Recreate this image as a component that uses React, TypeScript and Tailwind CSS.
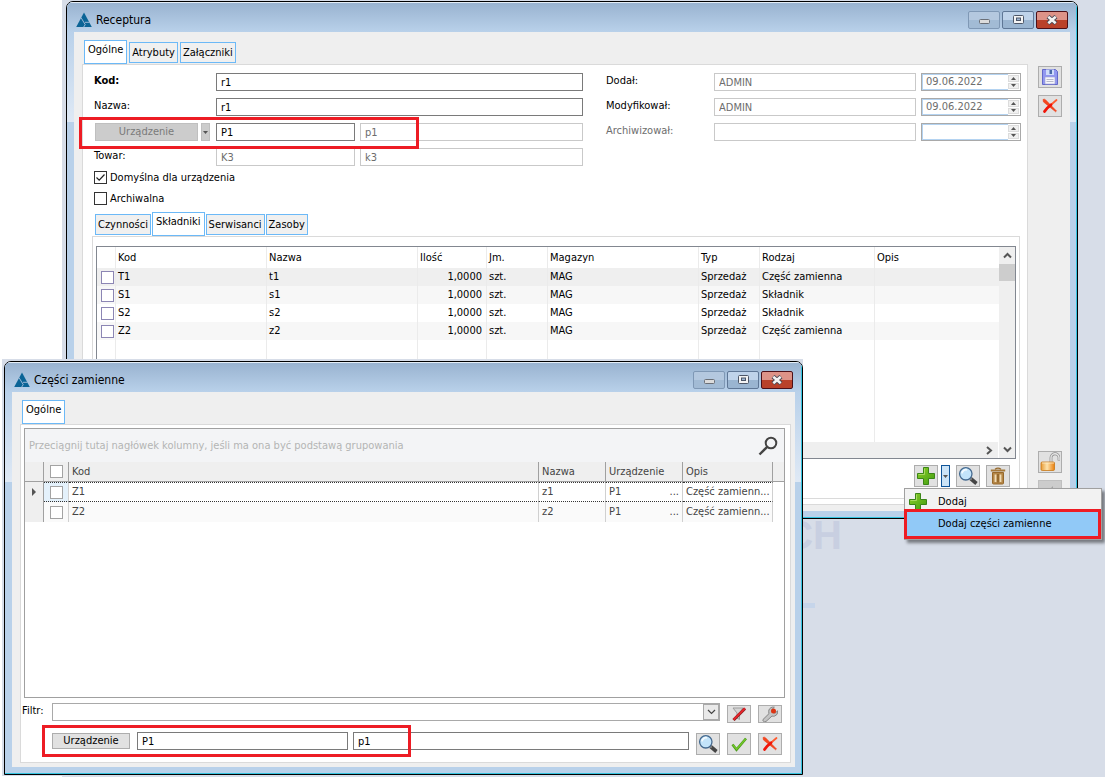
import type { ReactNode } from "react";
import clsx from "clsx";

const parts = [
  { code: "T1", name: "t1", kind: "Część zamienna" },
  { code: "S1", name: "s1", kind: "Składnik" },
  { code: "S2", name: "s2", kind: "Składnik" },
  { code: "Z2", name: "z2", kind: "Część zamienna" },
];

const spares = [
  { code: "Z1", name: "z1" },
  { code: "Z2", name: "z2" },
];

/* ---------- icons ---------- */

function Logo() {
  return (
    <svg width="16" height="16" viewBox="0 0 16 16" aria-hidden="true">
      <path d="M8 0.500L15.800 15H0.200z" fill="#0b6496" />
      <path d="M5 5.600L9.200 12.600L7.400 15.500" fill="none" stroke="#a9c1dc" strokeWidth="0.900" />
      <path d="M9 10.300H13.500" stroke="#a9c1dc" strokeWidth="0.900" />
    </svg>
  );
}

function PlusIcon() {
  return (
    <svg width="18" height="18" viewBox="0 0 18 18" aria-hidden="true">
      <defs>
        <linearGradient id="plus" x1="0" y1="0" x2="1" y2="1">
          <stop offset="0" stopColor="#8fd02a" />
          <stop offset="1" stopColor="#3f9c10" />
        </linearGradient>
      </defs>
      <path d="M6.500 .5h5v6h6v5h-6v6h-5v-6h-6v-5h6z" fill="url(#plus)" stroke="#3b8518" />
      <path d="M7.500 1.500v6h-6" fill="none" stroke="#b5e070" strokeWidth="0.800" />
    </svg>
  );
}

function LensIcon() {
  return (
    <svg width="20" height="20" viewBox="0 0 20 20" aria-hidden="true">
      <path d="M12.500 12.500l6 5" stroke="#454545" strokeWidth="3.600" />
      <path d="M11.600 11.600l2 2" stroke="#8a8a8a" strokeWidth="2" />
      <circle cx="7.800" cy="7.800" r="6.200" fill="#c3e4fa" stroke="#44698f" strokeWidth="1.300" />
      <path d="M4 7.400a4 4 0 0 1 5-3.600" fill="none" stroke="#f4fbff" strokeWidth="1.800" />
    </svg>
  );
}

function TrashIcon() {
  return (
    <svg width="18" height="18" viewBox="0 0 18 18" aria-hidden="true">
      <path d="M3.500 5.500h11v10.500q0 1-1 1h-9q-1 0-1-1z" fill="#b58748" stroke="#96692c" />
      <path d="M6.500 7.500v7.500M11.500 7.500v7.500" stroke="#f0dcb6" strokeWidth="1.800" />
      <path d="M9 7v8.500" stroke="#8f6327" strokeWidth="1.600" />
      <path d="M1.800 3.500h14.400" stroke="#a5793b" strokeWidth="2" />
      <path d="M6 2.300q3-2.200 6 0" fill="none" stroke="#96692c" strokeWidth="1.200" />
    </svg>
  );
}

function CrossIcon() {
  return (
    <svg width="16" height="16" viewBox="0 0 16 16" aria-hidden="true">
      <path d="M1 1.500q1.500-.8 2.500.3L14.500 13l-.8.800L1.500 4z" fill="#f4471f" stroke="#ee3a16" strokeWidth="0.600" />
      <path d="M14.500 2L9 6.800" stroke="#ff5c30" strokeWidth="1.800" strokeLinecap="round" />
      <path d="M9 6.800Q4.500 10 2.500 13.500" fill="none" stroke="#f01509" strokeWidth="2.800" strokeLinecap="round" />
    </svg>
  );
}

function DiskIcon() {
  return (
    <svg width="18" height="18" viewBox="0 0 18 18" aria-hidden="true">
      <path d="M1.500 1.500h13l2 2v13h-15z" fill="#9298f0" stroke="#6469c9" />
      <path d="M5 1.500h8V7H5z" fill="#cfdcfa" />
      <path d="M8.500 2H11v4H8.500z" fill="#4a6aa8" />
      <path d="M4 9h10v7H4z" fill="#f6f6fb" stroke="#9ea2d2" strokeWidth="0.600" />
      <path d="M5.500 11.500h7M5.500 13.500h7" stroke="#b6b9c9" />
    </svg>
  );
}

function LockIcon() {
  return (
    <svg width="20" height="20" viewBox="0 0 20 20" aria-hidden="true">
      <defs>
        <linearGradient id="lock" x1="0" y1="0" x2="1" y2="0">
          <stop offset="0" stopColor="#e79a35" />
          <stop offset="0.450" stopColor="#fde3ad" />
          <stop offset="1" stopColor="#ea7f0c" />
        </linearGradient>
      </defs>
      <path d="M11 10.500V6a4 4 0 0 1 8-.5V8.500" fill="none" stroke="#8e8e8e" strokeWidth="2.800" />
      <path d="M11 10.500V6a4 4 0 0 1 8-.5V8" fill="none" stroke="#e6e6e6" strokeWidth="1.400" />
      <rect x="1" y="10" width="13.500" height="8.500" rx="1.200" fill="url(#lock)" stroke="#c67718" strokeWidth="0.800" />
      <path d="M2 11h12" stroke="#fff0cd" strokeWidth="0.800" />
    </svg>
  );
}

function CheckIcon() {
  return (
    <svg width="16" height="16" viewBox="0 0 16 16" aria-hidden="true">
      <path d="M1.500 8.500l4 5.200L15 2.500" fill="none" stroke="#4c9a1c" strokeWidth="2.600" />
      <path d="M1.800 8.600l3.800 4.600L14.600 3" fill="none" stroke="#74c92a" strokeWidth="1.300" />
    </svg>
  );
}

function FilterOffIcon() {
  return (
    <svg width="16" height="14" viewBox="0 0 16 14" aria-hidden="true">
      <path d="M2 1h10L8.500 6v6.500L6 11V6z" fill="#d4d4d4" stroke="#9c9c9c" />
      <path d="M2.500 13L14 1.500" stroke="#7d2020" strokeWidth="3" />
      <path d="M2.500 12.700L14 1.200" stroke="#e4242b" strokeWidth="2" />
    </svg>
  );
}

function WrenchIcon() {
  return (
    <svg width="18" height="16" viewBox="0 0 18 16" aria-hidden="true">
      <path
        d="M2 13.500L8 7.600Q6.800 3.500 10 1.600q1.600-.9 3.400-.4L10.800 3.600l.6 2.800 2.700.7 2.500-2.300q.6 4.200-2.800 5.200-1.600.5-2.800 0L5 15.500q-1.500.7-2.700-.3-.8-1-.3-1.700z"
        fill="#c4c4c4"
        stroke="#858585"
      />
      <circle cx="12.500" cy="5" r="2.500" fill="#dd3412" />
    </svg>
  );
}

function Chevron({ d }: { d: string }) {
  return (
    <svg width="9" height="9" viewBox="0 0 9 9" aria-hidden="true">
      <path d={d} fill="none" stroke="#555" strokeWidth="2" />
    </svg>
  );
}

function Triangle({ up }: { up?: boolean }) {
  return (
    <svg width="5" height="3" viewBox="0 0 5 3" aria-hidden="true">
      <path d={up ? "M0 3L2.500 0L5 3z" : "M0 0L2.500 3L5 0z"} fill="#555" />
    </svg>
  );
}

/* ---------- controls ---------- */

function WindowButtons() {
  const base = "flex h-[18px] w-8 items-center justify-center rounded-[2px] border";
  return (
    <div className="flex gap-[2px]">
      <button
        aria-label="Minimalizuj"
        className={clsx(base, "border-[#7f98b5] bg-linear-to-b from-[#b4c8df] from-50% to-[#a2bbd5] to-50%")}
      >
        <svg width="11" height="5" viewBox="0 0 11 5" className="mt-1">
          <rect x=".5" y=".5" width="10" height="4" rx="1" fill="#dcdcdc" stroke="#6a6f77" />
        </svg>
      </button>
      <button
        aria-label="Maksymalizuj"
        className={clsx(base, "border-[#5f7796] bg-linear-to-b from-[#bfd3ea] from-50% to-[#9ab5d1] to-50%")}
      >
        <svg width="11" height="9" viewBox="0 0 11 9">
          <rect x=".5" y=".5" width="10" height="8" rx="1" fill="#f4f4f4" stroke="#4d5667" />
          <rect x="3.500" y="3" width="4" height="2.500" fill="#9fb6d4" stroke="#4d5667" />
        </svg>
      </button>
      <button
        aria-label="Zamknij"
        className={clsx(base, "border-[#4c1018] bg-linear-to-b from-[#dd9388] from-50% to-[#b9412a] to-50%")}
      >
        <svg width="12" height="10" viewBox="0 0 12 10">
          <path d="M2 1.500l8 7M10 1.500l-8 7" stroke="#4d4a55" strokeWidth="4.400" />
          <path d="M2.300 1.800l7.400 6.400M9.700 1.800L2.300 8.200" stroke="#f3f3f3" strokeWidth="2.600" />
        </svg>
      </button>
    </div>
  );
}

function Window({ title, className, children }: { title: string; className: string; children: ReactNode }) {
  return (
    <section aria-label={title} className={clsx("overflow-hidden rounded-t-[7px] border border-black", className)}>
      <div className="border-r border-b border-[#35c4e0] bg-[#b9d1ea]">
        <header className="flex h-[30px] items-center justify-between border-t border-[#e4edf6] bg-linear-to-b from-[#99b3d0] to-[#b9d1ea] pt-1 pr-2 pl-[9px]">
          <div className="flex items-center gap-1">
            <Logo />
            <h1 className="text-[12px] leading-4">{title}</h1>
          </div>
          <WindowButtons />
        </header>
        <div className="bg-linear-to-b from-[#b9d1ea] to-[#dfe9f5] bg-[length:100%_90px] bg-no-repeat pr-[6px] pb-[6px] pl-[7px]">
          <div className="bg-[#efefef]">{children}</div>
        </div>
      </div>
    </section>
  );
}

function Tabs({ items, active, className }: { items: string[]; active: string; className: string }) {
  return (
    <div role="tablist" className={clsx("flex items-end", className)}>
      {items.map((item) => (
        <button
          key={item}
          role="tab"
          aria-selected={item === active}
          className={clsx(
            "border border-[#6cb9f7] whitespace-nowrap",
            item === active ? "h-6 bg-white px-[3px] pb-1" : "mb-px h-[21px] bg-[#f0f0f0] px-[2px]"
          )}
        >
          {item}
        </button>
      ))}
    </div>
  );
}

function Field({ label, value = "", muted, className }: { label: string; value?: string; muted?: boolean; className?: string }) {
  return (
    <input
      aria-label={label}
      defaultValue={value}
      readOnly={muted}
      className={clsx(
        "h-[18px] min-w-0 border bg-white px-1 outline-none",
        muted ? "border-[#c9c9c9] text-[#6d6d6d]" : "border-[#7a7a7a] text-black",
        className
      )}
    />
  );
}

function DateField({ label, value = "" }: { label: string; value?: string }) {
  return (
    <div className="ml-[5px] flex h-[18px] border border-[#a9a9a9] bg-white">
      <input
        aria-label={label}
        defaultValue={value}
        className="min-w-0 flex-1 border border-r-0 border-[#b4d3f1] pl-[3px] text-[#6d6d6d] outline-none"
      />
      <div className="flex w-3 flex-col justify-center gap-px py-px pr-px">
        <button aria-label="Później" className="flex flex-1 items-center justify-center border border-[#dcdcdc] bg-[#f0f0f0]">
          <Triangle up />
        </button>
        <button aria-label="Wcześniej" className="flex flex-1 items-center justify-center border border-[#dcdcdc] bg-[#f0f0f0]">
          <Triangle />
        </button>
      </div>
    </div>
  );
}

function IconButton({ label, className, children }: { label: string; className?: string; children?: ReactNode }) {
  return (
    <button
      aria-label={label}
      className={clsx("flex w-6 shrink-0 items-center justify-center border border-[#adadad] bg-[#e1e1e1]", className ?? "h-[22px]")}
    >
      {children}
    </button>
  );
}

function Tick({ label, checked }: { label: string; checked?: boolean }) {
  return (
    <label className="flex h-[13px] items-center gap-[3px]">
      <span className="relative flex">
        <input
          type="checkbox"
          defaultChecked={checked}
          className="peer size-[13px] appearance-none border border-[#333] bg-white"
        />
        <svg width="13" height="13" viewBox="0 0 13 13" className="pointer-events-none absolute inset-0 hidden peer-checked:block">
          <path d="M2.500 6.500l2.700 2.700L10.500 3.500" fill="none" stroke="#222" strokeWidth="1.200" />
        </svg>
      </span>
      {label}
    </label>
  );
}

/* ---------- windows ---------- */

function PartsTable() {
  const cell = "border-r border-[#ebebeb] px-[2px]";
  return (
    <div className="mx-[3px] mt-[9px] flex h-[213px] border border-[#828790] bg-white">
      <div className="flex min-w-0 flex-1 flex-col">
        <table className="w-full flex-1 table-fixed border-separate border-spacing-0 text-left whitespace-nowrap">
          <colgroup>
            <col className="w-[19px]" />
            <col className="w-[151px]" />
            <col className="w-[151px]" />
            <col className="w-[69px]" />
            <col className="w-[61px]" />
            <col className="w-[151px]" />
            <col className="w-[61px]" />
            <col className="w-[115px]" />
            <col />
          </colgroup>
          <thead>
            <tr className="h-[21px]">
              <th className={cell} />
              {["Kod", "Nazwa", "Ilość", "Jm.", "Magazyn", "Typ", "Rodzaj"].map((h) => (
                <th key={h} className={clsx(cell, "font-normal")}>
                  {h}
                </th>
              ))}
              <th className="px-[2px] font-normal">Opis</th>
            </tr>
          </thead>
          <tbody>
            {parts.map((p, i) => (
              <tr key={p.code} className={clsx("h-[18px]", i === 0 ? "bg-[#efefef]" : i % 2 ? "bg-[#f7f7f7]" : "bg-white")}>
                <td className="border-r border-[#ebebeb] pl-1">
                  <input
                    type="checkbox"
                    aria-label={p.code}
                    className="block size-[13px] appearance-none border border-[#8c86b4] bg-white"
                  />
                </td>
                <td className={cell}>{p.code}</td>
                <td className={cell}>{p.name}</td>
                <td className="border-r border-[#ebebeb] pr-1 text-right">1,0000</td>
                <td className={cell}>szt.</td>
                <td className={cell}>MAG</td>
                <td className={cell}>Sprzedaż</td>
                <td className={cell}>{p.kind}</td>
                <td />
              </tr>
            ))}
            <tr className="h-[102px]">
              {Array.from({ length: 8 }, (_, i) => (
                <td key={i} className={cell} />
              ))}
              <td />
            </tr>
          </tbody>
        </table>
        <div className="flex h-4 shrink-0 items-center justify-end border-r border-white bg-[#efefef] pr-1">
          <Chevron d="M2 1l4 3.500L2 8" />
        </div>
      </div>
      <div className="flex w-4 flex-col items-center justify-between bg-[#efefef] py-1">
        <div className="flex w-full flex-col items-center gap-1">
          <Chevron d="M1 6.500L4.500 3L8 6.500" />
          <span className="h-[17px] w-full bg-[#cdcdcd]" />
        </div>
        <Chevron d="M1 2.500L4.500 6L8 2.500" />
      </div>
    </div>
  );
}

function RecipeWindow() {
  return (
    <Window title="Receptura" className="absolute top-px right-[27px] left-[66px]">
      <div className="flex pt-2 pl-2">
        <div className="min-w-0 flex-1 pb-[6px]">
          <Tabs className="ml-[2px] gap-[2px]" items={["Ogólne", "Atrybuty", "Załączniki"]} active="Ogólne" />
          <div className="border border-[#dadada] bg-white pt-2 pb-[5px]">
            <div className="flex gap-[23px] pr-[6px] pl-[11px]">
              <div className="grid flex-1 grid-cols-[122px_1fr] content-start gap-y-[7px]">
                <span className="font-bold">Kod:</span>
                <Field label="Kod" value="r1" />
                <span>Nazwa:</span>
                <Field label="Nazwa" value="r1" />
                <div className="relative flex gap-[3px]">
                  <button className="ml-px h-[18px] w-[103px] border border-[#bfbfbf] bg-[#cccccc] text-[#7a7a7a]">
                    Urządzenie
                  </button>
                  <button
                    aria-label="Wybierz urządzenie"
                    className="flex h-[18px] w-[9px] items-center justify-center border border-[#bfbfbf] bg-[#cccccc]"
                  >
                    <Triangle />
                  </button>
                  {/* highlight frame around the device row */}
                  <div className="pointer-events-none absolute -top-[6px] -left-[15px] z-10 h-8 w-[340px] border-3 border-[#ed1c24]" />
                </div>
                <div className="flex gap-[5px]">
                  <Field label="Kod urządzenia" value="P1" className="w-[139px]" />
                  <Field label="Nazwa urządzenia" value="p1" muted className="flex-1" />
                </div>
                <span>Towar:</span>
                <div className="flex gap-[5px]">
                  <Field label="Kod towaru" value="K3" muted className="w-[139px]" />
                  <Field label="Nazwa towaru" value="k3" muted className="flex-1" />
                </div>
              </div>
              <div className="grid grid-cols-[108px_202px_105px] content-start gap-y-[7px]">
                <span>Dodał:</span>
                <Field label="Dodał" value="ADMIN" muted />
                <DateField label="Data dodania" value="09.06.2022" />
                <span>Modyfikował:</span>
                <Field label="Modyfikował" value="ADMIN" muted />
                <DateField label="Data modyfikacji" value="09.06.2022" />
                <span className="text-[#6d6d6d]">Archiwizował:</span>
                <Field label="Archiwizował" muted />
                <DateField label="Data archiwizacji" />
              </div>
            </div>
            <div className="mt-[5px] flex flex-col items-start gap-2 pl-[11px]">
              <Tick label="Domyślna dla urządzenia" checked />
              <Tick label="Archiwalna" />
            </div>
            <Tabs
              className="mt-[7px] ml-3 gap-px"
              items={["Czynności", "Składniki", "Serwisanci", "Zasoby"]}
              active="Składniki"
            />
            <div className="mr-[7px] ml-[9px] border border-[#dadada] pb-[11px]">
              <PartsTable />
              <div className="mt-[6px] mr-[9px] flex justify-end gap-[6px]">
                <div className="flex gap-[3px]">
                  <IconButton label="Dodaj">
                    <PlusIcon />
                  </IconButton>
                  <button
                    aria-label="Rozwiń menu"
                    className="flex h-[22px] w-[9px] items-center justify-center border border-[#0f5499] bg-[#cce4f7]"
                  >
                    <Triangle />
                  </button>
                </div>
                <IconButton label="Szukaj">
                  <LensIcon />
                </IconButton>
                <IconButton label="Usuń">
                  <TrashIcon />
                </IconButton>
              </div>
            </div>
          </div>
        </div>
        <aside className="mr-2 ml-[10px] flex flex-col gap-[7px] pt-[26px] pb-[9px]">
          <IconButton label="Zapisz">
            <DiskIcon />
          </IconButton>
          <IconButton label="Anuluj">
            <CrossIcon />
          </IconButton>
          <IconButton label="Odblokuj" className="mt-auto h-[22px]">
            <LockIcon />
          </IconButton>
          <button
            aria-label="Powiązania"
            disabled
            className="flex h-[22px] w-6 items-center justify-center border border-[#bfbfbf] bg-[#cccccc]"
          >
            <svg width="14" height="14" viewBox="0 0 14 14" aria-hidden="true">
              <path d="M3 7l2-2h3l-1 5zM8 4l2-2v4l2 2-3 3z" fill="#a3a3a3" />
            </svg>
          </button>
        </aside>
      </div>
    </Window>
  );
}

function SparesGrid() {
  const head = "border-r border-b border-[#a0a0a0] px-[3px] font-normal";
  const cell = "border-r border-[#d0d0d0] px-[3px]";
  const box = "mx-auto block size-[13px] appearance-none border border-[#a3a3a3] bg-white";
  return (
    <div className="h-[270px] border border-[#a0a0a0] bg-white text-[#444]">
      <div className="flex h-[33px] items-center justify-between bg-[#f3f4f6] pr-[6px] pl-1 text-[#b4b4b4]">
        <span>Przeciągnij tutaj nagłówek kolumny, jeśli ma ona być podstawą grupowania</span>
        <button aria-label="Znajdź">
          <svg width="20" height="20" viewBox="0 0 20 20" fill="none" stroke="#444" strokeWidth="2">
            <circle cx="13" cy="7" r="5.300" />
            <path d="M9.200 10.800L1.500 18.500" strokeWidth="2.400" />
          </svg>
        </button>
      </div>
      <table className="w-full table-fixed border-separate border-spacing-0 text-left whitespace-nowrap">
        <colgroup>
          <col className="w-[19px]" />
          <col className="w-[25px]" />
          <col />
          <col className="w-[67px]" />
          <col className="w-[77px]" />
          <col className="w-[90px]" />
          <col className="w-[11px]" />
        </colgroup>
        <thead className="bg-[#efefef]">
          <tr className="h-5">
            <th className={head} />
            <th className={head}>
              <input type="checkbox" aria-label="Zaznacz wszystko" className={box} />
            </th>
            {["Kod", "Nazwa", "Urządzenie", "Opis"].map((h) => (
              <th key={h} className={head}>
                {h}
              </th>
            ))}
            <th className="border-b border-[#a0a0a0]" />
          </tr>
        </thead>
        <tbody>
          {spares.map((s, i) => {
            const focus = i === 0 && "border-y border-y-[#333] [border-top-style:dotted] [border-bottom-style:dotted]";
            return (
              <tr key={s.code} className={clsx("h-5", i === 1 && "bg-[#fafafa]")}>
                <td className="border-r border-[#a0a0a0] bg-[#efefef]">
                  {i === 0 && (
                    <svg width="4" height="8" viewBox="0 0 4 8" className="mx-auto" aria-hidden="true">
                      <path d="M0 0l4 4-4 4z" fill="#555" />
                    </svg>
                  )}
                </td>
                <td className={clsx("border-r border-[#d0d0d0]", focus, i === 0 && "bg-[#e4f1fb]")}>
                  <input type="checkbox" aria-label={s.code} className={box} />
                </td>
                <td className={clsx(cell, focus)}>{s.code}</td>
                <td className={clsx(cell, focus)}>{s.name}</td>
                <td className={clsx(cell, focus)}>
                  <span className="flex justify-between">
                    <span>P1</span>
                    <span>...</span>
                  </span>
                </td>
                <td className={clsx(cell, focus)}>Część zamienn...</td>
                <td className="bg-white" />
              </tr>
            );
          })}
        </tbody>
      </table>
    </div>
  );
}

function SparesWindow() {
  return (
    <div className="absolute right-[302px] bottom-px left-[2px] bg-[#d7dde8] pt-[2px] pb-px pl-[2px]">
      <Window title="Części zamienne" className="w-full">
        <div className="pt-2 pr-1 pb-1 pl-2">
          <Tabs className="ml-[2px]" items={["Ogólne"]} active="Ogólne" />
          <div className="border border-[#dadada] bg-white pt-[3px] pb-[7px]">
            <div className="pr-[5px] pl-[3px]">
              <SparesGrid />
            </div>
            <div className="mt-[5px] flex items-start gap-[7px] pr-2 pl-px">
              <label className="flex flex-1">
                <span className="w-[30px] leading-4">Filtr:</span>
                <span className="flex h-[18px] flex-1 border border-[#a9a9a9]">
                  <input className="min-w-0 flex-1 px-1 outline-none" />
                  <span className="flex w-4 items-center justify-center border border-[#a9a9a9] bg-[#e9e9e9]">
                    <svg width="9" height="6" viewBox="0 0 9 6" aria-hidden="true">
                      <path d="M1 1l3.500 3.500L8 1" fill="none" stroke="#444" strokeWidth="1.200" />
                    </svg>
                  </span>
                </span>
              </label>
              <IconButton label="Wyczyść filtr" className="mt-[2px] h-[18px]">
                <FilterOffIcon />
              </IconButton>
              <IconButton label="Konfiguruj filtr" className="mt-[2px] h-[18px]">
                <WrenchIcon />
              </IconButton>
            </div>
            <div className="relative mt-[9px] flex items-start gap-[7px] pr-2 pl-[31px]">
              <button className="mt-px h-4 w-[78px] border border-[#adadad] bg-[#e1e1e1] leading-[14px]">Urządzenie</button>
              <div className="flex flex-1 gap-[5px]">
                <Field label="Kod urządzenia" value="P1" className="w-[211px]" />
                <Field label="Nazwa urządzenia" value="p1" className="flex-1" />
              </div>
              <IconButton label="Szukaj" className="mt-px h-[22px]">
                <LensIcon />
              </IconButton>
              <IconButton label="Zatwierdź" className="mt-px h-[22px]">
                <CheckIcon />
              </IconButton>
              <IconButton label="Anuluj" className="mt-px h-[22px]">
                <CrossIcon />
              </IconButton>
              {/* highlight frame around the device filter */}
              <div className="pointer-events-none absolute -top-[7px] left-[21px] h-8 w-[369px] border-3 border-[#ed1c24]" />
            </div>
          </div>
        </div>
      </Window>
    </div>
  );
}

function AddMenu() {
  return (
    <div
      role="menu"
      className="absolute top-[488px] right-[3px] w-[198px] border border-[#a0a0a0] bg-[#f2f2f2] shadow-[3px_3px_3px_rgba(0,0,0,0.45)]"
    >
      <button role="menuitem" className="flex h-5 w-full items-center pt-[6px] pl-1">
        <span className="w-[29px]">
          <PlusIcon />
        </span>
        Dodaj
      </button>
      <button
        role="menuitem"
        className="relative -ml-px flex h-[30px] w-[197px] items-center border-3 border-[#ed1c24] bg-[#91c9f7] pl-[31px]"
      >
        Dodaj części zamienne
      </button>
    </div>
  );
}

export default function App() {
  return (
    <main className="relative h-screen min-h-[777px] overflow-hidden bg-white font-['DejaVu_Sans_Condensed','DejaVu_Sans',sans-serif] text-[11px] leading-4 text-black">
      {/* desktop behind the windows */}
      <div className="absolute inset-y-0 right-0 left-[62px] bg-[#d7dde8]">
        <span
          aria-hidden="true"
          className="absolute top-[512px] right-[263px] font-['Liberation_Sans',sans-serif] text-[40px] leading-[46px] font-bold text-[#c8cfe1]"
        >
          CH
        </span>
        <span className="absolute top-[603px] right-[290px] h-[5px] w-5 bg-[#c6d5ea]" />
      </div>
      <RecipeWindow />
      <SparesWindow />
      <AddMenu />
    </main>
  );
}
